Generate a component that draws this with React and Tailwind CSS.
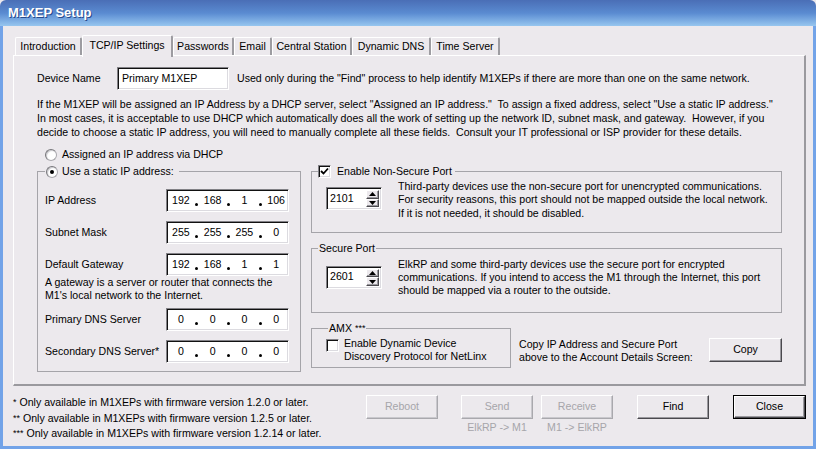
import { Fragment } from 'react';

const sunken =
  'bg-white border border-t-[#828186] border-l-[#828186] border-r-white border-b-white shadow-[inset_1px_1px_0_#111,inset_-1px_-1px_0_#dcdbe0]';

const raised =
  'bg-[#ece9ed] border border-t-white border-l-white border-r-[#4a494e] border-b-[#4a494e] shadow-[inset_-1px_-1px_0_#9a999e]';

const raisedOff =
  'bg-[#ece9ed] border border-t-white border-l-white border-r-[#a9a8ad] border-b-[#a9a8ad] shadow-[inset_-1px_-1px_0_#c9c8cd]';

const Radio = ({ checked }) => (
  <span className="w-[12px] h-[12px] shrink-0 rounded-full bg-white border border-[#a9a8ad] border-t-[#77767b] border-l-[#77767b] shadow-[inset_1px_1px_1px_#c8c7cc] flex items-center justify-center">
    {checked && <span className="w-[4px] h-[4px] rounded-full bg-black" />}
  </span>
);

const Check = ({ checked }) => (
  <span className={`w-[13px] h-[13px] shrink-0 flex items-center justify-center ${sunken}`}>
    {checked && (
      <svg width="9" height="9" viewBox="0 0 9 9">
        <path d="M1 4 L3.5 6.5 L8 1.5" stroke="#000" strokeWidth="1.8" fill="none" />
      </svg>
    )}
  </span>
);

const IpField = ({ parts }) => (
  <div className={`w-[123px] h-[23px] flex items-center pl-[2px] ${sunken}`}>
    {parts.map((p, i) => (
      <Fragment key={i}>
        {i > 0 && (
          <span className="w-[8px] h-[12px] flex justify-center items-end">
            <span className="w-[3px] h-[3px] rounded-full bg-black mb-[1px]" />
          </span>
        )}
        <span className="w-[24px] text-center">{p}</span>
      </Fragment>
    ))}
  </div>
);

const Spin = ({ value }) => (
  <div className={`w-[56px] h-[23px] shrink-0 flex items-stretch p-[2px] ${sunken}`}>
    <div className="flex-1 flex items-center pl-[1px]">{value}</div>
    <div className="w-[13px] flex flex-col">
      <div className={`flex-1 flex items-center justify-center ${raised}`}>
        <svg width="7" height="4" viewBox="0 0 7 4">
          <path d="M0 4 L3.5 0 L7 4 Z" fill="#000" />
        </svg>
      </div>
      <div className={`flex-1 flex items-center justify-center ${raised}`}>
        <svg width="7" height="4" viewBox="0 0 7 4">
          <path d="M0 0 L7 0 L3.5 4 Z" fill="#000" />
        </svg>
      </div>
    </div>
  </div>
);

const tabs = [
  { label: 'Introduction', w: 'w-[67px]' },
  { label: 'TCP/IP Settings', w: 'w-[91px]', active: true },
  { label: 'Passwords', w: 'w-[61px]' },
  { label: 'Email', w: 'w-[38px]' },
  { label: 'Central Station', w: 'w-[80px]' },
  { label: 'Dynamic DNS', w: 'w-[79px]' },
  { label: 'Time Server', w: 'w-[69px]' },
];

const IpRow = ({ label, parts, className }) => (
  <div className={`flex items-center justify-between ${className}`}>
    <span>{label}</span>
    <IpField parts={parts} />
  </div>
);

const App = () => {
  return (
    <div className="w-[816px] h-[449px] flex flex-col overflow-hidden font-['Liberation_Sans',Arial,sans-serif] text-[10.6px] whitespace-nowrap text-black bg-[#ece9ed]">
      {/* Title bar */}
      <div className="h-[26px] shrink-0 rounded-t-[6px] bg-linear-to-b from-[#4a6eb6] via-[#5a8bd1] to-[#97c6ef] flex items-center pl-[8px]">
        <span className="text-white font-bold text-[13px] [text-shadow:1px_1px_0_#284a8c]">M1XEP Setup</span>
      </div>

      <div className="flex-1 flex flex-col border-x-[3px] border-b-[3px] border-[#72a3e8]">
        {/* Tabs */}
        <div className="flex items-end h-[20px] mt-[9px] ml-[12px]">
          {tabs.map((t) => (
            <div
              key={t.label}
              className={`${t.w} flex items-center justify-center rounded-t-[2px] border-t border-l border-white border-r-2 border-r-[#9d9ca1] ${
                t.active ? 'h-[22px] -mb-[2px] relative z-10 bg-[#ece9ed] pb-[2px]' : 'h-[18px]'
              }`}
            >
              {t.label}
            </div>
          ))}
        </div>

        {/* Tab panel */}
        <div className="ml-[10px] w-[793px] h-[331px] shrink-0 border-t border-l border-white border-r-2 border-b-2 border-r-[#9a999e] border-b-[#9a999e] pl-[23px] pt-[11px]">
          <div className="flex items-center h-[23px]">
            <span className="w-[80px]">Device Name</span>
            <div className={`w-[112px] h-[23px] flex items-center pl-[4px] ${sunken}`}>Primary M1XEP</div>
            <span className="ml-[8px]">Used only during the "Find" process to help identify M1XEPs if there are more than one on the same network.</span>
          </div>

          <p className="mt-[7px] leading-[14px] whitespace-pre">
            {'If the M1XEP will be assigned an IP Address by a DHCP server, select "Assigned an IP address."  To assign a fixed address, select "Use a static IP address."'}
            <br />
            {'In most cases, it is acceptable to use DHCP which automatically does all the work of setting up the network ID, subnet mask, and gateway.  However, if you'}
            <br />
            {'decide to choose a static IP address, you will need to manually complete all these fields.  Consult your IT professional or ISP provider for these details.'}
          </p>

          <div className="mt-[9px] ml-[8px] h-[13px] flex items-center gap-[5px]">
            <Radio />
            <span>Assigned an IP address via DHCP</span>
          </div>

          <div className="flex items-start gap-[10px] mt-[4px]">
            {/* Static IP group */}
            <fieldset className="w-[264px] border border-[#a5a4a9] pl-[7px] pr-[11px] pb-[8px]">
              <legend className="pl-[1px] pr-[5px] leading-[13px]">
                <span className="inline-flex items-center gap-[4px] h-[13px] align-top">
                  <Radio checked />
                  <span>Use a static IP address:</span>
                </span>
              </legend>
              <IpRow className="mt-[11px]" label="IP Address" parts={['192', '168', '1', '106']} />
              <IpRow className="mt-[9px]" label="Subnet Mask" parts={['255', '255', '255', '0']} />
              <IpRow className="mt-[9px]" label="Default Gateway" parts={['192', '168', '1', '1']} />
              <p className="leading-[13px]">
                A gateway is a server or router that connects the
                <br />
                M1's local network to the Internet.
              </p>
              <IpRow className="mt-[6px]" label="Primary DNS Server" parts={['0', '0', '0', '0']} />
              <IpRow className="mt-[9px]" label="Secondary DNS Server*" parts={['0', '0', '0', '0']} />
            </fieldset>

            <div className="w-[471px] flex flex-col">
              {/* Non-secure port */}
              <fieldset className="border border-[#a5a4a9] px-[6px] pb-[12px]">
                <legend className="pr-[3px] leading-[13px]">
                  <span className="inline-flex items-center gap-[6px] h-[13px] align-top">
                    <Check checked />
                    <span>Enable Non-Secure Port</span>
                  </span>
                </legend>
                <div className="flex items-start mt-[2px]">
                  <div className="ml-[8px] mt-[7px]">
                    <Spin value="2101" />
                  </div>
                  <p className="ml-[16px] leading-[13.3px]">
                    Third-party devices use the non-secure port for unencrypted communications.
                    <br />
                    For security reasons, this port should not be mapped outside the local network.
                    <br />
                    If it is not needed, it should be disabled.
                  </p>
                </div>
              </fieldset>

              {/* Secure port */}
              <fieldset className="mt-[9px] border border-[#a5a4a9] px-[6px] pb-[14px]">
                <legend className="px-[1px] leading-[13px]">Secure Port</legend>
                <div className="flex items-start mt-[3px]">
                  <div className="ml-[8px] mt-[8px]">
                    <Spin value="2601" />
                  </div>
                  <p className="ml-[16px] leading-[13.3px]">
                    ElkRP and some third-party devices use the secure port for encrypted
                    <br />
                    communications. If you intend to access the M1 through the Internet, this port
                    <br />
                    should be mapped via a router to the outside.
                  </p>
                </div>
              </fieldset>

              {/* AMX + copy */}
              <div className="flex items-start mt-[9px]">
                <fieldset className="w-[200px] border border-[#a5a4a9] pl-[14px] pb-[4px]">
                  <legend className="ml-[2px] px-[1px] leading-[13px]">
                    AMX <span className="text-[9px] align-top">***</span>
                  </legend>
                  <div className="flex items-start">
                    <div className="mt-[4px]">
                      <Check />
                    </div>
                    <p className="ml-[5px] mt-[2px] leading-[13.3px]">
                      Enable Dynamic Device
                      <br />
                      Discovery Protocol for NetLinx
                    </p>
                  </div>
                </fieldset>
                <p className="ml-[8px] mt-[16px] leading-[13.3px]">
                  Copy IP Address and Secure Port
                  <br />
                  above to the Account Details Screen:
                </p>
                <button className={`ml-auto mt-[16px] w-[73px] h-[24px] flex items-center justify-center ${raised}`}>Copy</button>
              </div>
            </div>
          </div>
        </div>

        {/* Footer */}
        <div className="flex items-start pt-[9px] pl-[10px]">
          <div className="w-[353px] leading-[15.5px]">
            <div>
              <span className="text-[9px] align-top">*</span> Only available in M1XEPs with firmware version 1.2.0 or later.
            </div>
            <div>
              <span className="text-[9px] align-top">**</span> Only available in M1XEPs with firmware version 1.2.5 or later.
            </div>
            <div>
              <span className="text-[9px] align-top">***</span> Only available in M1XEPs with firmware version 1.2.14 or later.
            </div>
          </div>
          <button className={`w-[72px] h-[24px] flex items-center justify-center text-[#a6a5aa] ${raisedOff}`}>Reboot</button>
          <div className="ml-[23px] flex flex-col items-center">
            <button className={`w-[72px] h-[24px] flex items-center justify-center text-[#a6a5aa] ${raisedOff}`}>Send</button>
            <span className="mt-[1px] text-[#a6a5aa]">ElkRP -&gt; M1</span>
          </div>
          <div className="ml-[8px] flex flex-col items-center">
            <button className={`w-[72px] h-[24px] flex items-center justify-center text-[#a6a5aa] ${raisedOff}`}>Receive</button>
            <span className="mt-[1px] text-[#a6a5aa]">M1 -&gt; ElkRP</span>
          </div>
          <button className={`ml-[24px] w-[72px] h-[24px] flex items-center justify-center ${raised}`}>Find</button>
          <div className="ml-[24px] w-[73px] h-[24px] border border-black">
            <button className={`w-full h-full flex items-center justify-center ${raised}`}>Close</button>
          </div>
        </div>
      </div>
    </div>
  );
};

export default App;
